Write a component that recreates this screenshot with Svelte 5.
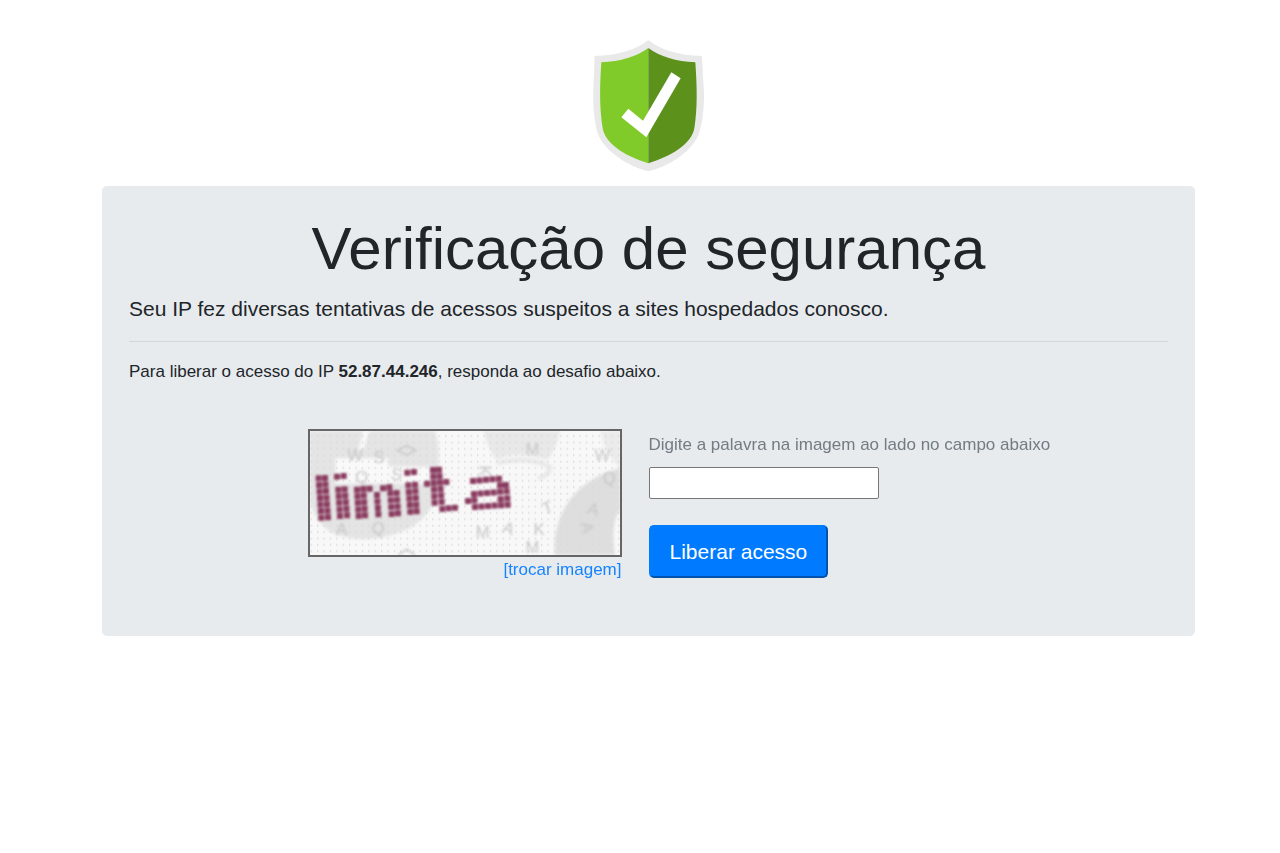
<script>
  // Draws evenly spaced cells from the first point to the last.
  function run(x1, y1, x2, y2, count) {
    return Array.from({ length: count }, (_, i) => {
      const t = count > 1 ? i / (count - 1) : 0;
      return [x1 + (x2 - x1) * t, y1 + (y2 - y1) * t];
    });
  }

  const cells = [
    ...run(56, 175, 64, 293, 7), ...run(75, 174, 84, 292, 7),
    ...run(111, 170, 131, 168, 2), ...run(115, 209, 120, 288, 5), ...run(134, 208, 141, 286, 5),
    ...run(171, 209, 176, 288, 5), ...run(190, 207, 195, 286, 5), [209, 206],
    ...run(231, 225, 235, 283, 4), ...run(249, 205, 268, 202, 2),
    ...run(271, 220, 275, 282, 4), ...run(290, 219, 294, 280, 4),
    ...run(322, 158, 342, 156, 2), ...run(325, 196, 331, 275, 5), ...run(345, 194, 350, 274, 5),
    ...run(399, 150, 404, 248, 6), ...run(417, 149, 425, 246, 6), [381, 191], [439, 186],
    ...run(427, 267, 465, 263, 3),
    ...run(519, 183, 597, 176, 5), ...run(600, 196, 618, 195, 2),
    ...run(522, 222, 620, 214, 6), ...run(504, 243, 523, 241, 2),
    ...run(602, 237, 622, 235, 2), ...run(525, 261, 623, 254, 6)
  ];

  const glyphs = [
    ['W', 165, 123, 0], ['S', 237, 128, 0], ['Q', 185, 188, 0], ['Q', 235, 342, 0],
    ['A', 125, 345, 0], ['M', 697, 106, 0], ['W', 907, 124, 0], ['K', 555, 170, 90],
    ['M', 548, 354, 0], ['A', 626, 342, 20], ['K', 717, 346, 0], ['T', 743, 280, -20],
    ['A', 880, 284, 15], ['Q', 928, 192, 0], ['A', 862, 340, 80], ['M', 697, 400, 0],
    ['S', 290, 180, 10]
  ];

  let answer = $state('');
</script>

<svelte:head><title>Verificação de segurança</title></svelte:head>

<main>
  <svg class="shield" viewBox="0 0 336 396" role="img" aria-label="Escudo de segurança">
    <path fill="#e9e9e9" d="M166 0 C206 31 256 46 327 48 C329 81 330 121 333 154 C334 203 329 249 316 286 C293 337 229 379 166 394 C105 379 40 337 16 286 C4 249 0 203 1 154 C2 121 4 81 5 48 C76 46 126 31 166 0 Z" />
    <path fill="#80cb29" d="M166 24 C132 50 82 64 25 67 C20 139 19 203 29 265 C38 312 94 347 166 370 Z" />
    <path fill="#5c911c" d="M166 24 C200 50 250 64 307 67 C312 139 314 203 304 265 C295 312 238 347 166 370 Z" />
    <path fill="#fff" d="M85 232 L106 206 L150 242 L235 97 L263 115 L160 292 Z" />
  </svg>

  <section class="panel">
    <h1>Verificação de segurança</h1>
    <p class="lead">Seu IP fez diversas tentativas de acessos suspeitos a sites hospedados conosco.</p>
    <hr />
    <p class="intro">Para liberar o acesso do IP <strong>52.87.44.246</strong>, responda ao desafio abaixo.</p>

    <form onsubmit={(e) => e.preventDefault()}>
      <div class="challenge">
        <svg class="captcha" viewBox="30 33 930 372" role="img" aria-label="Imagem do desafio">
          <defs>
            <pattern id="dots" x="43" y="38" width="19.2" height="19.2" patternUnits="userSpaceOnUse">
              <ellipse cx="10" cy="10" rx="2" ry="3.4" fill="#dadada" />
            </pattern>
            <filter id="soft" x="-10%" y="-10%" width="120%" height="120%"><feGaussianBlur stdDeviation="4" /></filter>
            <filter id="edge"><feGaussianBlur stdDeviation="2.4" /></filter>
          </defs>
          <rect x="30" y="33" width="930" height="372" fill="#f8f8f8" />
          <g filter="url(#soft)">
            <path fill="#e4e4e4" d="M30 33 H405 Q425 90 410 160 Q430 260 330 325 Q200 385 90 335 Q50 310 30 250 Z" />
            <path fill="#f9f9f9" d="M107 115 H265 V140 H390 V190 H107 Z M190 33 H208 L190 90 H175 Z" />
            <path fill="#e8e8e8" d="M550 33 H780 Q765 100 740 120 Q650 90 590 120 Q565 90 550 33 Z" />
            <path fill="none" stroke="#e8e8e8" stroke-width="14" d="M590 130 Q680 105 750 140 Q750 165 715 175" />
            <path fill="#dedede" d="M765 405 C755 290 820 180 960 145 V270 Q930 310 945 405 Z" />
            <path fill="#ebebeb" d="M900 33 H960 V145 Q915 100 900 33 Z" />
          </g>
          <rect x="30" y="33" width="930" height="372" fill="url(#dots)" />
          <g filter="url(#edge)">
            <g class="noise">
              {#each glyphs as [letter, x, y, angle]}
                <text {x} {y} transform="rotate({angle} {x} {y - 17})">{letter}</text>
              {/each}
            </g>
            <path fill="none" stroke="#cacaca" stroke-width="5" d="M292 91 L320 77 L347 91 L320 105 Z M295 405 L320 388 L345 405" />
          </g>
          <g filter="url(#edge)" fill="#8a3c60">
            {#each cells as [x, y]}
              <rect x={x - 9} y={y - 9} width="18" height="18" rx="2" />
            {/each}
          </g>
        </svg>
        <a href="#trocar">[trocar imagem]</a>
      </div>

      <div class="answer">
        <label for="word">Digite a palavra na imagem ao lado no campo abaixo</label>
        <input id="word" type="text" autocomplete="off" bind:value={answer} />
        <button type="submit">Liberar acesso</button>
      </div>
    </form>
  </section>
</main>

<style>
  :global(body) {
    background: #fff;
  }

  main {
    box-sizing: border-box;
    display: flex;
    flex-direction: column;
    align-items: center;
    gap: 14px;
    padding: 40px 85px 40px 102px;
    color: #212529;
    font-family: "Liberation Sans", Arial, sans-serif;
    font-size: 17px;
    line-height: 26px;
  }

  .shield {
    width: 112px;
    height: 132px;
  }

  .panel {
    box-sizing: border-box;
    width: 100%;
    padding: 27px 27px 53px;
    border-radius: 5px;
    background: #e7ebee;
  }

  h1 {
    margin: 0;
    font-size: 60px;
    font-weight: 400;
    line-height: 72px;
    text-align: center;
  }

  p {
    margin: 0;
  }

  .lead {
    margin-top: 8px;
    font-size: 21px;
    line-height: 32px;
  }

  hr {
    height: 1px;
    margin: 16px 0 17px;
    border: 0;
    background: #d3d7da;
  }

  form {
    display: grid;
    grid-template-columns: repeat(2, minmax(0, 1fr));
    margin-top: 44px;
  }

  .challenge {
    display: flex;
    flex-direction: column;
    align-items: flex-end;
    padding-right: 27px;
  }

  .captcha {
    width: 310px;
    height: 124px;
    border: 2px solid #666;
  }

  .noise {
    fill: #c8c8c8;
    font-family: "Liberation Sans", Arial, sans-serif;
    font-size: 50px;
    text-anchor: middle;
  }

  a {
    color: #1683ff;
    text-decoration: none;
  }

  a:hover {
    text-decoration: underline;
  }

  .answer {
    display: flex;
    flex-direction: column;
    align-items: flex-start;
    padding-top: 3px;
  }

  label {
    color: #737b83;
  }

  input {
    box-sizing: border-box;
    width: 230px;
    height: 32px;
    margin-top: 9px;
    padding: 2px 4px;
    border: 1px solid #767676;
    border-radius: 2px;
    background: #fff;
    font: inherit;
  }

  button {
    box-sizing: border-box;
    height: 53px;
    margin-top: 26px;
    padding: 0 19px;
    border: 2px outset #007bff;
    border-radius: 5px;
    background: #007bff;
    color: #fff;
    font-family: inherit;
    font-size: 21px;
  }
</style>
